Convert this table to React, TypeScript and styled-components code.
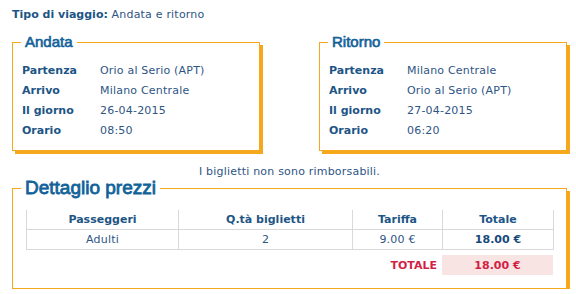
import React from "react";
import styled, { createGlobalStyle } from "styled-components";

const Global = createGlobalStyle`
  html, body { margin: 0; padding: 0; background: #ffffff; }
  body { font-family: "DejaVu Sans", Verdana, sans-serif; font-size: 11px; color: #2e5584; letter-spacing: 0.2px; }
  b, th, strong { letter-spacing: 0; }
`;

const ORANGE = "#f6a81c";
const HEAD = "#12629a";
const LABEL = "#1d5585";
const VALUE = "#2e5584";

const Page = styled.div`
  width: 555px;
  padding: 8px 9px 0 12px;
`;

const TripType = styled.div`
  line-height: 14px;
  color: ${VALUE};
  b { color: ${LABEL}; font-weight: bold; }
`;

const Legs = styled.div`
  display: flex;
  justify-content: space-between;
  margin-top: 11px;
`;

const Box = styled.fieldset<{ $w?: number }>`
  margin: 0;
  min-width: 0;
  width: ${(p) => (p.$w ? `${p.$w}px` : "auto")};
  box-sizing: border-box;
  border: 1px solid ${ORANGE};
  box-shadow: 3px 3px 0 ${ORANGE};
  padding: 9px 9px 10px 9px;
`;

const Legend = styled.legend<{ $big?: boolean; $shift: number }>`
  font-family: "Liberation Sans", Arial, sans-serif;
  font-size: ${(p) => (p.$big ? 19 : 15)}px;
  line-height: 18px;
  letter-spacing: 0;
  color: ${HEAD};
  -webkit-text-stroke: ${(p) => (p.$big ? 0.8 : 0.65)}px ${HEAD};
  padding: 0 4px;
  margin-left: ${(p) => p.$shift}px;
`;

const InfoGrid = styled.div`
  display: grid;
  grid-template-columns: 78px 1fr;
  grid-auto-rows: 20px;
  align-items: center;
`;

const Label = styled.div`
  font-weight: bold;
  letter-spacing: 0;
  color: ${LABEL};
`;

const Value = styled.div`
  color: ${VALUE};
`;

const Notice = styled.div`
  margin-top: 14px;
  line-height: 14px;
  text-align: center;
  color: ${VALUE};
`;

const PriceBox = styled(Box)`
  padding: 13px 13px 13px 13px;
`;

const Table = styled.table`
  width: 527px;
  border-collapse: collapse;
  table-layout: fixed;
`;

const Th = styled.th`
  height: 19px;
  padding: 0;
  font-weight: bold;
  color: ${LABEL};
  text-align: center;
  border-left: 1px solid #d9d9d9;
  border-right: 1px solid #d9d9d9;
  border-bottom: 1px solid #d9d9d9;
`;

const Td = styled.td<{ $bold?: boolean }>`
  height: 19px;
  padding: 0;
  text-align: center;
  color: ${(p) => (p.$bold ? "#17497a" : VALUE)};
  font-weight: ${(p) => (p.$bold ? "bold" : "normal")};
  letter-spacing: ${(p) => (p.$bold ? "0" : "0.2px")};
  border: 1px solid #d9d9d9;
`;

const TotalRow = styled.div`
  display: grid;
  grid-template-columns: 1fr 111px;
  height: 20px;
  margin-top: 5px;
  width: 527px;
  align-items: stretch;
  font-weight: bold;
  letter-spacing: 0;
  color: #d21f45;
`;

const TotalLabel = styled.div`
  display: flex;
  align-items: center;
  justify-content: flex-end;
  padding-right: 5px;
`;

const TotalValue = styled.div`
  display: flex;
  align-items: center;
  justify-content: center;
  background: #f9e4e4;
`;

type Leg = { title: string; rows: [string, string][] };

const legs: Leg[] = [
  {
    title: "Andata",
    rows: [
      ["Partenza", "Orio al Serio (APT)"],
      ["Arrivo", "Milano Centrale"],
      ["Il giorno", "26-04-2015"],
      ["Orario", "08:50"],
    ],
  },
  {
    title: "Ritorno",
    rows: [
      ["Partenza", "Milano Centrale"],
      ["Arrivo", "Orio al Serio (APT)"],
      ["Il giorno", "27-04-2015"],
      ["Orario", "06:20"],
    ],
  },
];

export default function App() {
  return (
    <>
      <Global />
      <Page>
        <TripType>
          <b>Tipo di viaggio:</b> Andata e ritorno
        </TripType>
        <Legs>
          {legs.map((leg) => (
            <Box key={leg.title} $w={248}>
              <Legend $shift={-1}>{leg.title}</Legend>
              <InfoGrid>
                {leg.rows.map(([l, v]) => (
                  <React.Fragment key={l}>
                    <Label>{l}</Label>
                    <Value>{v}</Value>
                  </React.Fragment>
                ))}
              </InfoGrid>
            </Box>
          ))}
        </Legs>
        <Notice>I biglietti non sono rimborsabili.</Notice>
        <PriceBox>
          <Legend $big $shift={-5}>Dettaglio prezzi</Legend>
          <Table>
            <colgroup>
              <col style={{ width: 152 }} />
              <col style={{ width: 174 }} />
              <col style={{ width: 90 }} />
              <col style={{ width: 111 }} />
            </colgroup>
            <thead>
              <tr>
                <Th>Passeggeri</Th>
                <Th>Q.tà biglietti</Th>
                <Th>Tariffa</Th>
                <Th>Totale</Th>
              </tr>
            </thead>
            <tbody>
              <tr>
                <Td>Adulti</Td>
                <Td>2</Td>
                <Td>9.00 €</Td>
                <Td $bold>18.00 €</Td>
              </tr>
            </tbody>
          </Table>
          <TotalRow>
            <TotalLabel>TOTALE</TotalLabel>
            <TotalValue>18.00 €</TotalValue>
          </TotalRow>
        </PriceBox>
      </Page>
    </>
  );
}
